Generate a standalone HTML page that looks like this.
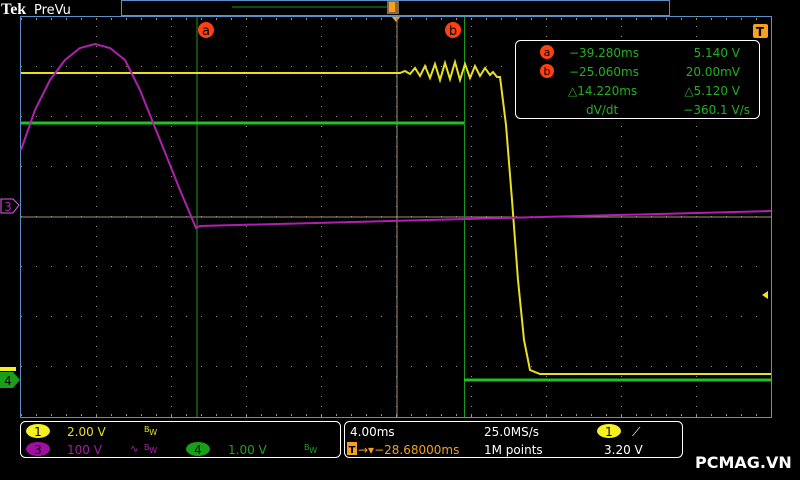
<!DOCTYPE html>
<html><head><meta charset="utf-8"><style>
body{margin:0;background:#000;width:800px;height:480px;overflow:hidden;font-family:"DejaVu Sans","Liberation Sans",sans-serif}
svg{position:absolute;left:0;top:0}
</style></head><body>
<svg width="800" height="480" viewBox="0 0 800 480" font-family="DejaVu Sans, Liberation Sans, sans-serif">
<rect width="800" height="480" fill="#000"/>
<text x="1" y="14" font-family="Liberation Serif,serif" font-weight="bold" font-size="16" fill="#fff">Tek</text>
<text x="34" y="14" font-size="13" fill="#fff">PreVu</text>
<rect x="121.5" y="0.5" width="548" height="15" fill="none" stroke="#5a8fc8"/>
<line x1="232" y1="7" x2="392" y2="7" stroke="#1a9a1a"/>
<rect x="387" y="1" width="12" height="13" fill="#8a6a3a"/>
<rect x="389" y="2" width="6" height="10" fill="#f5a020"/>
<polygon points="391,16 401,16 396,22" fill="#f5a020"/>
<!-- graticule frame -->
<rect x="20.5" y="16.5" width="751" height="401" fill="none" stroke="#5a8fc8"/>
<g fill="#a09070">
<!-- grid dots -->
<g id="dots"></g>
</g>
<line x1="21" y1="217" x2="771" y2="217" stroke="#a09070"/>
<line x1="397" y1="17" x2="397" y2="417" stroke="#a09070"/>
<line x1="197" y1="17" x2="197" y2="417" stroke="#1a9a1a"/>
<line x1="464.5" y1="17" x2="464.5" y2="417" stroke="#1a9a1a"/>
<!-- traces -->
<polyline points="21,123 464,123" stroke="#22c022" stroke-width="3" fill="none"/>
<polyline points="464,380 771,380" stroke="#22c022" stroke-width="3" fill="none"/>
<polyline points="21,73 400,73 405,71 410,74 415,68 420,76 425,66 430,78 435,64 440,80 445,63 450,79 455,62 460,80 465,64 470,78 475,66 480,76 485,68 490,75 493,72 497,77 500,77 506,125 512,200 518,280 524,340 530,370 540,374 771,374" stroke="#e8e020" stroke-width="2" fill="none"/>
<polyline points="21,150 35,110 50,80 65,60 80,48 95,44 110,48 125,60 140,90 160,140 180,190 196,228 200,226 771,211" stroke="#b020b0" stroke-width="2" fill="none"/>
<!-- cursor labels -->
<circle cx="206" cy="30" r="8" fill="#ff4010"/><text x="206" y="35" font-size="13" text-anchor="middle" fill="#000">a</text>
<circle cx="453" cy="30" r="8" fill="#ff4010"/><text x="453" y="35" font-size="13" text-anchor="middle" fill="#000">b</text>
<rect x="753" y="24" width="15" height="14" rx="2" fill="#f5a020"/><text x="760" y="36" font-size="12" font-weight="bold" text-anchor="middle" fill="#000">T</text>
<polygon points="762,295 768,291 768,299" fill="#f5e020"/>
<!-- channel markers -->
<polygon points="1,199 13,199 19,205 13,213 1,213" fill="#000" stroke="#e060e0"/><text x="8" y="211" font-size="12" text-anchor="middle" fill="#b020b0">3</text>
<rect x="0" y="367" width="16" height="4" fill="#f0f020"/>
<polygon points="0,372 13,372 20,380 13,388 0,388" fill="#18a018"/><text x="8" y="385" font-size="12" text-anchor="middle" fill="#000">4</text>
<!-- measurement box -->
<rect x="515.5" y="40.5" width="244" height="78" rx="5" fill="#000" stroke="#fff"/>
<circle cx="547" cy="52" r="7" fill="#ff4010"/><text x="547" y="56" font-size="11" text-anchor="middle" fill="#000">a</text>
<circle cx="547" cy="71" r="7" fill="#ff4010"/><text x="547" y="75" font-size="11" text-anchor="middle" fill="#000">b</text>
<g font-size="12" fill="#22b022">
<text x="569" y="57">−39.280ms</text><text x="740" y="57" text-anchor="end">5.140 V</text>
<text x="569" y="76">−25.060ms</text><text x="740" y="76" text-anchor="end">20.00mV</text>
<text x="568" y="95">△14.220ms</text><text x="740" y="95" text-anchor="end">△5.120 V</text>
<text x="586" y="114">dV/dt</text><text x="750" y="114" text-anchor="end">−360.1 V/s</text>
</g>
<!-- bottom panels -->
<rect x="20.5" y="421.5" width="320" height="36" rx="5" fill="none" stroke="#fff"/>
<rect x="344.5" y="421.5" width="338" height="36" rx="5" fill="none" stroke="#fff"/>
<ellipse cx="38" cy="431" rx="12" ry="7" fill="#f5f020"/><text x="38" y="436" font-size="12" text-anchor="middle" fill="#000">1</text>
<text x="67" y="436" font-size="12" fill="#e8e020">2.00 V</text>
<text x="144" y="432" font-size="8" fill="#e8e020">B<tspan dy="3">W</tspan></text>
<ellipse cx="38" cy="449" rx="12" ry="7" fill="#a010a0"/><text x="38" y="454" font-size="12" text-anchor="middle" fill="#000">3</text>
<text x="67" y="454" font-size="12" fill="#a020a0">100 V</text>
<text x="130" y="452" font-size="10" fill="#b020b0">∿</text><text x="144" y="450" font-size="8" fill="#b020b0">B<tspan dy="3">W</tspan></text>
<ellipse cx="198" cy="449" rx="12" ry="7" fill="#18a018"/><text x="198" y="454" font-size="12" text-anchor="middle" fill="#000">4</text>
<text x="228" y="454" font-size="12" fill="#22a022">1.00 V</text>
<text x="304" y="450" font-size="8" fill="#22a022">B<tspan dy="3">W</tspan></text>
<g font-size="12" fill="#fff">
<text x="350" y="436">4.00ms</text>
<text x="484" y="436">25.0MS/s</text>
<text x="484" y="454">1M points</text>
<text x="604" y="454">3.20 V</text>
<text x="632" y="436">⟋</text>
</g>
<rect x="347" y="442" width="10" height="13" fill="#f5a020"/><text x="352" y="453" font-size="10" font-weight="bold" text-anchor="middle" fill="#000">T</text>
<text x="358" y="454" font-size="12" fill="#f5a020">→▾−28.68000ms</text>
<ellipse cx="609" cy="431" rx="12" ry="7" fill="#f5f020"/><text x="609" y="436" font-size="12" text-anchor="middle" fill="#000">1</text>
<text x="695" y="468" font-size="16" font-weight="bold" fill="#fff">PCMAG.VN</text>
</svg>
<script>
var g=document.getElementById('dots'),s='';
for(var x=21;x<=771;x+=15){for(var y=66;y<=366;y+=50){s+='<rect x="'+x+'" y="'+y+'" width="1" height="1"/>';}}
for(var x=96;x<=696;x+=75){for(var y=16;y<=417;y+=10){s+='<rect x="'+x+'" y="'+y+'" width="1" height="1"/>';}}
for(var x=21;x<=771;x+=15){s+='<rect x="'+x+'" y="18" width="1" height="2"/><rect x="'+x+'" y="414" width="1" height="2"/>';}
g.innerHTML=s;
</script>
</body></html>
